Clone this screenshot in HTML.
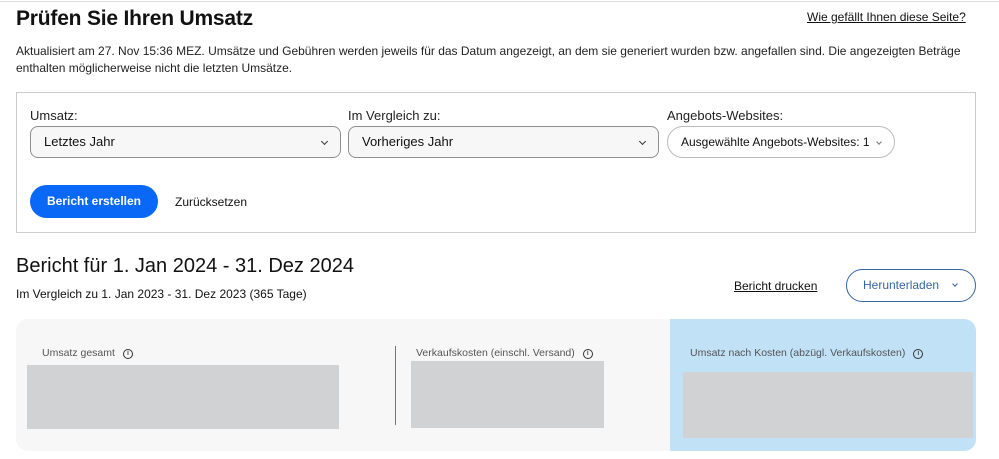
<!DOCTYPE html>
<html><head><meta charset="utf-8"><style>
*{box-sizing:border-box;margin:0;padding:0}
body{width:999px;height:459px;background:#fff;font-family:"Liberation Sans",sans-serif;color:#111;position:relative;overflow:hidden}
.a{position:absolute}
.sel{position:absolute;height:32px;border:1px solid #8f8f8f;border-radius:8px;background:#f7f7f7;font-size:13px;line-height:30px;padding-left:13px}
.chev{position:absolute;right:13px;top:12px;width:5px;height:5px;border-right:1.2px solid #333;border-bottom:1.2px solid #333;transform:rotate(45deg)}
.lbl{position:absolute;font-size:13px;color:#222}
.info{display:inline-block;width:10px;height:10px;border:1px solid #333;border-radius:50%;font-size:7px;line-height:8px;text-align:center;margin-left:8px;vertical-align:1px;font-weight:bold}
.gray{position:absolute;background:#d1d2d4}
.small{position:absolute;font-size:10.5px;color:#555}
</style></head><body>
<div class="a" style="left:0;top:1px;width:999px;height:1px;background:#ddd"></div>
<div class="a" style="left:16px;top:7px;font-size:21px;font-weight:bold;letter-spacing:-0.2px">Prüfen Sie Ihren Umsatz</div>
<div class="a" style="left:807px;top:10px;font-size:12px;text-decoration:underline">Wie gefällt Ihnen diese Seite?</div>
<div class="a" style="left:16px;top:43px;font-size:12px;line-height:17px;width:975px;color:#222">Aktualisiert am 27. Nov 15:36 MEZ. Umsätze und Gebühren werden jeweils für das Datum angezeigt, an dem sie generiert wurden bzw. angefallen sind. Die angezeigten Beträge enthalten möglicherweise nicht die letzten Umsätze.</div>
<div class="a" style="left:16px;top:92px;width:960px;height:141px;border:1px solid #ccc"></div>
<div class="lbl" style="left:30px;top:108px">Umsatz:</div>
<div class="lbl" style="left:348px;top:108px">Im Vergleich zu:</div>
<div class="lbl" style="left:667px;top:108px">Angebots-Websites:</div>
<div class="sel" style="left:30px;top:126px;width:311px">Letztes Jahr<span class="chev"></span></div>
<div class="sel" style="left:348px;top:126px;width:311px">Vorheriges Jahr<span class="chev"></span></div>
<div class="sel" style="left:667px;top:126px;width:228px;border-radius:16px;background:#fff;border-color:#bbb;font-size:12px">Ausgewählte Angebots-Websites: 1<span class="chev" style="width:4px;height:4px;top:13px;border-color:#777"></span></div>
<div class="a" style="left:30px;top:185px;width:128px;height:33px;border-radius:17px;background:#0968f6;color:#fff;font-size:12px;font-weight:bold;line-height:33px;text-align:center">Bericht erstellen</div>
<div class="a" style="left:175px;top:195px;font-size:12px">Zurücksetzen</div>
<div class="a" style="left:16px;top:255px;font-size:20px">Bericht für 1. Jan 2024 - 31. Dez 2024</div>
<div class="a" style="left:16px;top:287px;font-size:12px">Im Vergleich zu 1. Jan 2023 - 31. Dez 2023 (365 Tage)</div>
<div class="a" style="left:734px;top:279px;font-size:12px;text-decoration:underline">Bericht drucken</div>
<div class="a" style="left:846px;top:269px;width:130px;height:33px;border:1px solid #3665a3;border-radius:17px;color:#3665a3;font-size:12px;line-height:31px;padding-left:16px">Herunterladen<span style="position:absolute;right:18px;top:12px;width:4px;height:4px;border-right:1.2px solid #3665a3;border-bottom:1.2px solid #3665a3;transform:rotate(45deg)"></span></div>
<div class="a" style="left:16px;top:319px;width:960px;height:132px;background:#f7f7f7;border-radius:12px;overflow:hidden">
<div class="a" style="left:654px;top:0;width:306px;height:132px;background:#c1e1f7"></div></div>
<div class="small" style="left:42px;top:347px">Umsatz gesamt<span class="info">i</span></div>
<div class="gray" style="left:27px;top:365px;width:312px;height:64px"></div>
<div class="a" style="left:395px;top:346px;width:1px;height:79px;background:#777"></div>
<div class="small" style="left:416px;top:347px">Verkaufskosten (einschl. Versand)<span class="info">i</span></div>
<div class="gray" style="left:411px;top:361px;width:193px;height:67px"></div>
<div class="small" style="left:690px;top:347px">Umsatz nach Kosten (abzügl. Verkaufskosten)<span class="info">i</span></div>
<div class="gray" style="left:683px;top:372px;width:290px;height:66px"></div>
</body></html>
